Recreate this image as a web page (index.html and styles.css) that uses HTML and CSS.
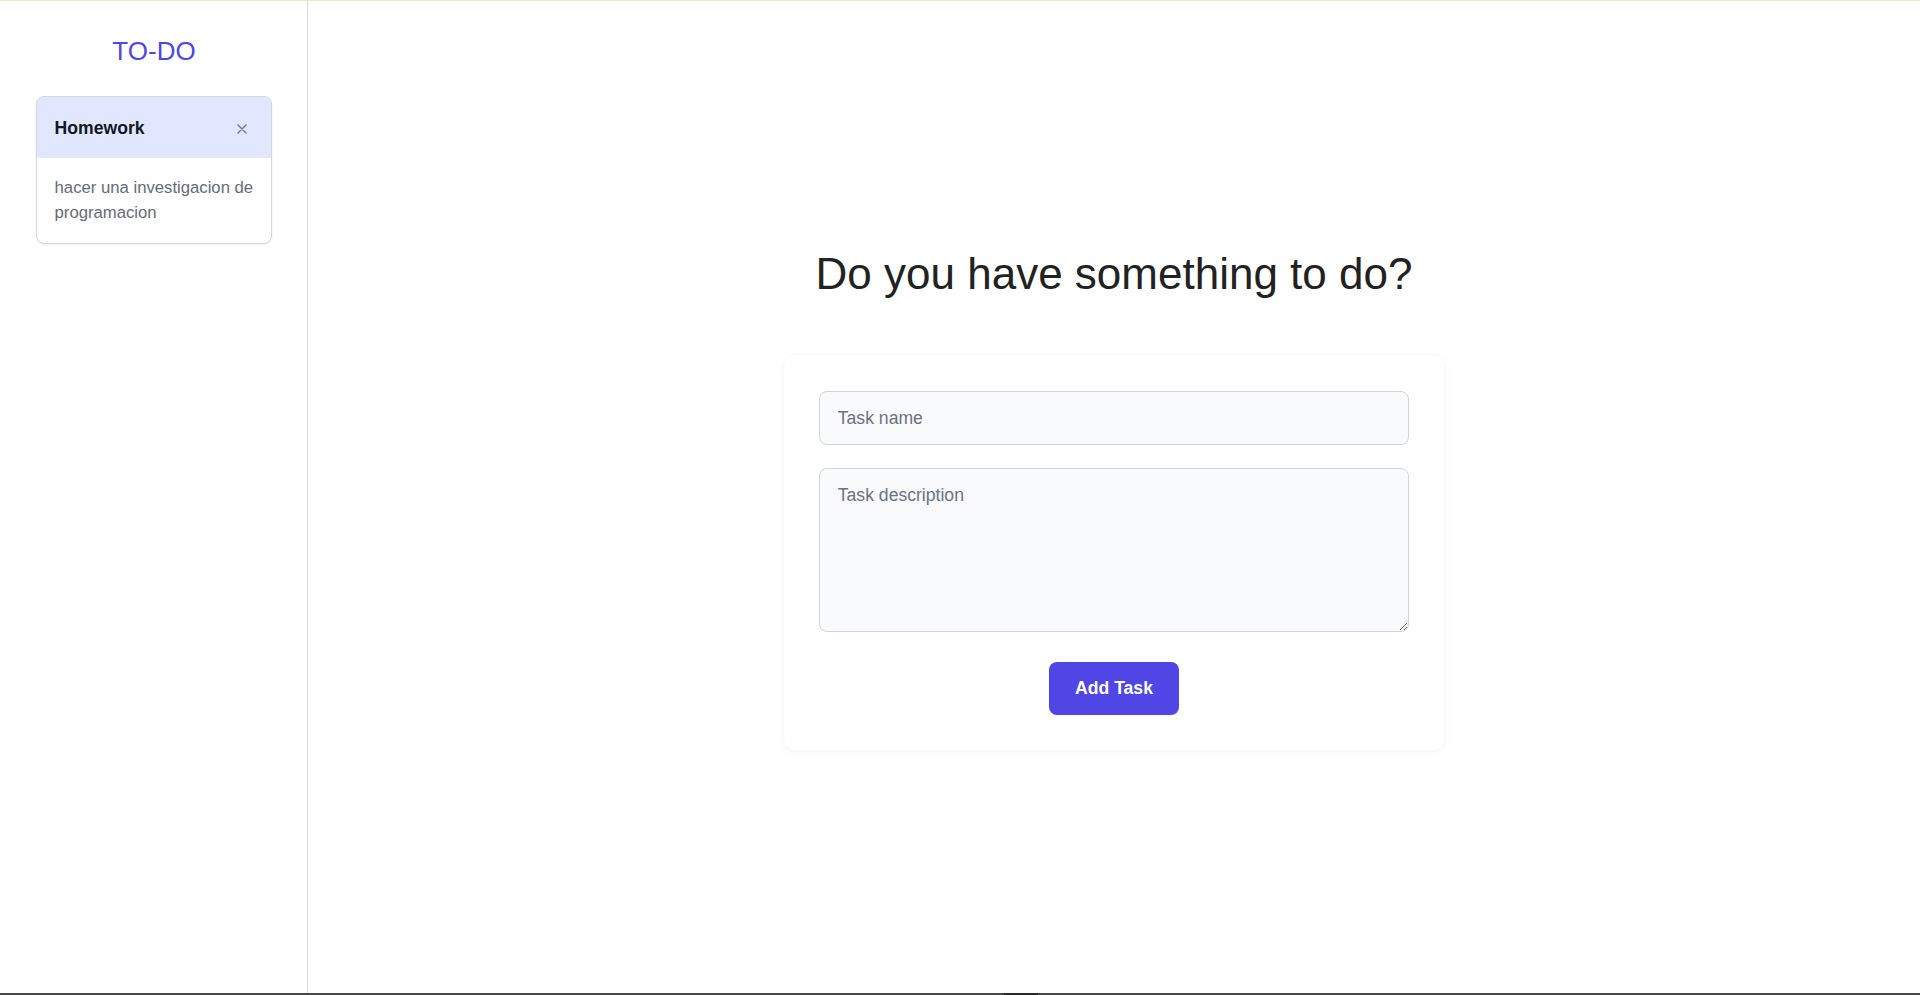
FILE: index.html
```html
<!DOCTYPE html>
<html lang="en">
<head>
<meta charset="utf-8">
<title>TO-DO</title>
<link rel="stylesheet" href="styles.css">
</head>
<body>
<div class="topline"></div>
<div class="layout">
  <aside class="sidebar">
    <h1 class="brand">TO-DO</h1>
    <div class="task">
      <div class="task-head">
        <span class="task-title">Homework</span>
        <button class="task-close" aria-label="Delete">
          <svg width="10" height="10" viewBox="0 0 10 10"><path d="M1 1L9 9M9 1L1 9" stroke="#6b7280" stroke-width="1.3" stroke-linecap="round" fill="none"/></svg>
        </button>
      </div>
      <div class="task-body">hacer una investigacion de programacion</div>
    </div>
  </aside>
  <main class="main">
    <h2 class="question">Do you have something to do?</h2>
    <form class="form-card">
      <input class="field" type="text" placeholder="Task name">
      <textarea class="field area" placeholder="Task description"></textarea>
      <button type="button" class="add-btn">Add Task</button>
    </form>
  </main>
</div>
<div class="bottombar"><div class="thumb"></div></div>
</body>
</html>
```
FILE: styles.css
```css
* { box-sizing: border-box; }
html, body { margin: 0; padding: 0; }
body {
  width: 1920px;
  height: 995px;
  display: flex;
  flex-direction: column;
  background: #ffffff;
  font-family: "Liberation Sans", Arial, sans-serif;
  overflow: hidden;
}
.topline {
  height: 1px;
  flex: none;
  background: #f3e2cc;
}
.layout {
  flex: 1;
  display: flex;
  min-height: 0;
}
.sidebar {
  width: 308px;
  flex: none;
  border-right: 1px solid #d9d9de;
  padding: 35px 35px 0 36px;
  display: flex;
  flex-direction: column;
}
.brand {
  margin: 0 0 30px 0;
  font-size: 26px;
  font-weight: 400;
  line-height: 30px;
  text-align: center;
  color: #4f46e5;
}
.task {
  border: 1px solid #d4d6dc;
  border-radius: 8px;
  overflow: hidden;
  background: #fff;
  box-shadow: 0 1px 3px rgba(0,0,0,0.06);
}
.task-head {
  background: #e0e7ff;
  display: flex;
  align-items: center;
  justify-content: space-between;
  padding: 17.5px 17.6px 17.5px 17.6px;
}
.task-title {
  font-weight: 700;
  font-size: 17.6px;
  line-height: 26.4px;
  color: #111827;
}
.task-close {
  border: 0;
  background: transparent;
  padding: 0;
  margin: 2px 6px 0 0;
  width: 10px;
  height: 10px;
  display: flex;
  cursor: pointer;
}
.task-body {
  padding: 18px 17.6px 17.2px 17.6px;
  font-size: 16.7px;
  line-height: 24.75px;
  color: #656b76;
}
.main {
  flex: 1;
  display: flex;
  flex-direction: column;
  align-items: center;
  justify-content: center;
  padding-top: 5px;
}
.question {
  margin: 0 0 56px 0;
  font-size: 44px;
  font-weight: 400;
  line-height: 50.6px;
  color: #222222;
}
.form-card {
  width: 660px;
  padding: 35.6px 35.2px 35.6px 35.2px;
  background: #fff;
  border-radius: 11px;
  box-shadow: 0 2px 10px rgba(0,0,0,0.045), 0 0 2px rgba(0,0,0,0.03);
  display: flex;
  flex-direction: column;
  align-items: center;
}
.field {
  width: 100%;
  height: 54.5px;
  padding: 13px 17.6px;
  border: 1px solid #d1d5db;
  border-radius: 8px;
  background: #f9fafb;
  font-family: "Liberation Sans", Arial, sans-serif;
  font-size: 17.6px;
  line-height: 26px;
  color: #111827;
  outline: none;
}
.field::placeholder { color: #6b7280; opacity: 1; }
.area {
  height: 164.5px;
  margin-top: 22.7px;
  resize: vertical;
  display: block;
}
.add-btn {
  margin-top: 30px;
  background: #4f46e5;
  color: #fff;
  border: 0;
  border-radius: 8px;
  padding: 13px 25.7px;
  font-family: "Liberation Sans", Arial, sans-serif;
  font-weight: 700;
  font-size: 17.6px;
  line-height: 26.4px;
  cursor: pointer;
}
.bottombar {
  height: 2px;
  flex: none;
  background: #474747;
  display: flex;
}
.thumb {
  margin-left: 1004px;
  width: 34px;
  background: #2b2b2b;
}
```
